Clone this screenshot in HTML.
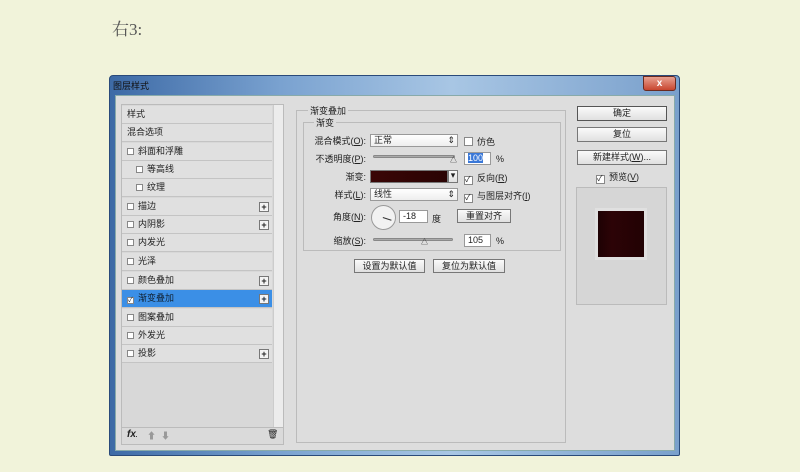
<!DOCTYPE html>
<html><head><meta charset="utf-8"><style>
*{margin:0;padding:0;box-sizing:border-box}
body{width:800px;height:472px;background:#f1f3da;font-family:"Liberation Sans","Noto Sans CJK SC",sans-serif;font-size:9px;color:#222;position:relative;overflow:hidden}
.a{position:absolute}
.win{left:109px;top:75px;width:571px;height:381px;background:linear-gradient(90deg,#3d6aa6,#7aa2d0 30%,#a8c6e4 60%,#7aa0cc);border:1px solid #2a4a7a;border-radius:4px 4px 2px 2px}
.inner{left:115px;top:95px;width:560px;height:356px;background:#dddddd;border:1px solid #8aa;}
.row{position:absolute;left:122px;width:150px;height:18px;border-bottom:1px solid #c4c4c4;background:#e0e0e0;padding-left:5px;line-height:17px}
.cb{display:inline-block;width:7px;height:7px;border:1px solid #888;background:#fff;margin-right:4px;vertical-align:-1px}
.plus{position:absolute;right:3px;top:4px;width:10px;height:10px;border:1px solid #777;background:#f4f4f4;font-size:9px;line-height:8px;text-align:center;font-weight:bold}
.btn{position:absolute;background:linear-gradient(#fafafa,#e0e0e0);border:1px solid #777;text-align:center;line-height:13px;font-size:9px}
.box{position:absolute;border:1px solid #bbb}
.lbl{position:absolute;text-align:right;line-height:12px}
.inp{position:absolute;background:#fff;border:1px solid #999;height:13px;line-height:11px;padding-left:3px}
.sl{position:absolute;height:3px;background:#aaa;border:1px solid #888;border-radius:2px}
</style></head><body>
<div class="a" style="left:112px;top:15px;font-size:17px;color:#555;font-family:'Liberation Serif','Noto Serif CJK SC',serif">右3:</div>
<div class="a win"></div>
<div class="a" style="left:113px;top:79px;font-size:9px;color:#111">图层样式</div>
<div class="a" style="left:643px;top:76px;width:33px;height:15px;background:linear-gradient(#e8a090,#c8452f);border:1px solid #6a2a20;border-radius:0 3px 3px 3px;color:#fff;text-align:center;font-size:10px;line-height:13px;font-weight:bold">x</div>
<div class="a inner"></div>
<div class="a" style="left:121px;top:104px;width:163px;height:341px;background:#d8d8d8;border:1px solid #bbb"></div>
<div class="a" style="left:273px;top:105px;width:10px;height:322px;background:#ececec;border-left:1px solid #ccc"></div>
<div class="row" style="top:106px">样式</div>
<div class="row" style="top:124px">混合选项</div>
<div class="row" style="top:143px"><span class="cb"></span>斜面和浮雕</div>
<div class="row" style="top:161px;padding-left:14px"><span class="cb"></span>等高线</div>
<div class="row" style="top:179px;padding-left:14px"><span class="cb"></span>纹理</div>
<div class="row" style="top:198px"><span class="cb"></span>描边<span class="plus">+</span></div>
<div class="row" style="top:216px"><span class="cb"></span>内阴影<span class="plus">+</span></div>
<div class="row" style="top:234px"><span class="cb"></span>内发光</div>
<div class="row" style="top:253px"><span class="cb"></span>光泽</div>
<div class="row" style="top:272px"><span class="cb"></span>颜色叠加<span class="plus">+</span></div>
<div class="row" style="top:290px;background:#3b8fe6;color:#123;width:150px"><span class="cb" style="font-size:7px;line-height:5px">✓</span>渐变叠加<span class="plus">+</span></div>
<div class="row" style="top:309px"><span class="cb"></span>图案叠加</div>
<div class="row" style="top:327px"><span class="cb"></span>外发光</div>
<div class="row" style="top:345px"><span class="cb"></span>投影<span class="plus">+</span></div>
<div class="a" style="left:122px;top:427px;width:161px;height:17px;border-top:1px solid #bbb;background:#dadada"></div>
<div class="a" style="left:127px;top:429px;font-style:italic;font-weight:bold;font-size:10px">fx<span style="font-size:6px">.</span></div>
<div class="a" style="left:147px;top:429px;color:#999;font-size:9px">⬆ &nbsp;⬇</div>
<div class="a" style="left:267px;top:429px;font-size:9px">🗑</div>

<div class="box" style="left:296px;top:110px;width:270px;height:333px"></div>
<div class="a" style="left:308px;top:104px;background:#ddd;padding:0 2px">渐变叠加</div>
<div class="box" style="left:303px;top:122px;width:258px;height:129px"></div>
<div class="a" style="left:314px;top:116px;background:#ddd;padding:0 2px">渐变</div>
<div class="lbl" style="left:300px;width:66px;top:135px">混合模式(<u>O</u>):</div>
<div class="inp" style="left:370px;top:134px;width:88px;background:linear-gradient(#fff,#eee)">正常<span style="float:right;padding-right:2px">⇕</span></div>
<div class="a" style="left:464px;top:135px"><span class="cb" style="width:9px;height:9px"></span>仿色</div>
<div class="lbl" style="left:300px;width:66px;top:153px">不透明度(<u>P</u>):</div>
<div class="sl" style="left:373px;top:155px;width:82px"></div>
<div class="a" style="left:450px;top:155px;font-size:7px">△</div>
<div class="inp" style="left:464px;top:152px;width:27px"><span style="background:#3a78d8;color:#fff">100</span></div>
<div class="a" style="left:496px;top:154px">%</div>
<div class="lbl" style="left:300px;width:66px;top:171px">渐变:</div>
<div class="a" style="left:370px;top:170px;width:78px;height:13px;background:linear-gradient(90deg,#3a0606,#2a0303);border:1px solid #777"></div>
<div class="btn" style="left:448px;top:170px;width:10px;height:13px;line-height:9px">▾</div>
<div class="a" style="left:464px;top:171px"><span class="cb" style="width:9px;height:9px;font-size:8px;line-height:6px">✓</span>反向(<u>R</u>)</div>
<div class="lbl" style="left:300px;width:66px;top:189px">样式(<u>L</u>):</div>
<div class="inp" style="left:370px;top:188px;width:88px;background:linear-gradient(#fff,#eee)">线性<span style="float:right;padding-right:2px">⇕</span></div>
<div class="a" style="left:464px;top:189px"><span class="cb" style="width:9px;height:9px;font-size:8px;line-height:6px">✓</span>与图层对齐(<u>I</u>)</div>
<div class="lbl" style="left:300px;width:66px;top:211px">角度(<u>N</u>):</div>
<div class="a" style="left:371px;top:205px;width:25px;height:25px;border-radius:50%;border:1px solid #999;background:#f2f2f2"></div>
<div class="a" style="left:383px;top:217px;width:9px;height:1px;background:#333;transform:rotate(18deg);transform-origin:0 0"></div>
<div class="inp" style="left:399px;top:210px;width:29px">-18</div>
<div class="a" style="left:432px;top:212px">度</div>
<div class="btn" style="left:457px;top:209px;width:54px;height:14px">重置对齐</div>
<div class="lbl" style="left:300px;width:66px;top:235px">缩放(<u>S</u>):</div>
<div class="sl" style="left:373px;top:238px;width:80px"></div>
<div class="a" style="left:421px;top:237px;font-size:7px">△</div>
<div class="inp" style="left:464px;top:234px;width:27px">105</div>
<div class="a" style="left:496px;top:236px">%</div>
<div class="btn" style="left:354px;top:259px;width:71px;height:14px">设置为默认值</div>
<div class="btn" style="left:433px;top:259px;width:72px;height:14px">复位为默认值</div>

<div class="btn" style="left:577px;top:106px;width:90px;height:15px;border-color:#555">确定</div>
<div class="btn" style="left:577px;top:127px;width:90px;height:15px">复位</div>
<div class="btn" style="left:577px;top:150px;width:90px;height:15px">新建样式(<u>W</u>)...</div>
<div class="a" style="left:596px;top:170px"><span class="cb" style="width:9px;height:9px;font-size:8px;line-height:6px">✓</span>预览(<u>V</u>)</div>
<div class="box" style="left:576px;top:187px;width:91px;height:118px;background:#d6d6d6"></div>
<div class="a" style="left:598px;top:211px;width:46px;height:46px;background:linear-gradient(90deg,#1e0204,#2c0306 30%,#220204);box-shadow:0 0 0 3px #e0e0e0"></div>
</body></html>
